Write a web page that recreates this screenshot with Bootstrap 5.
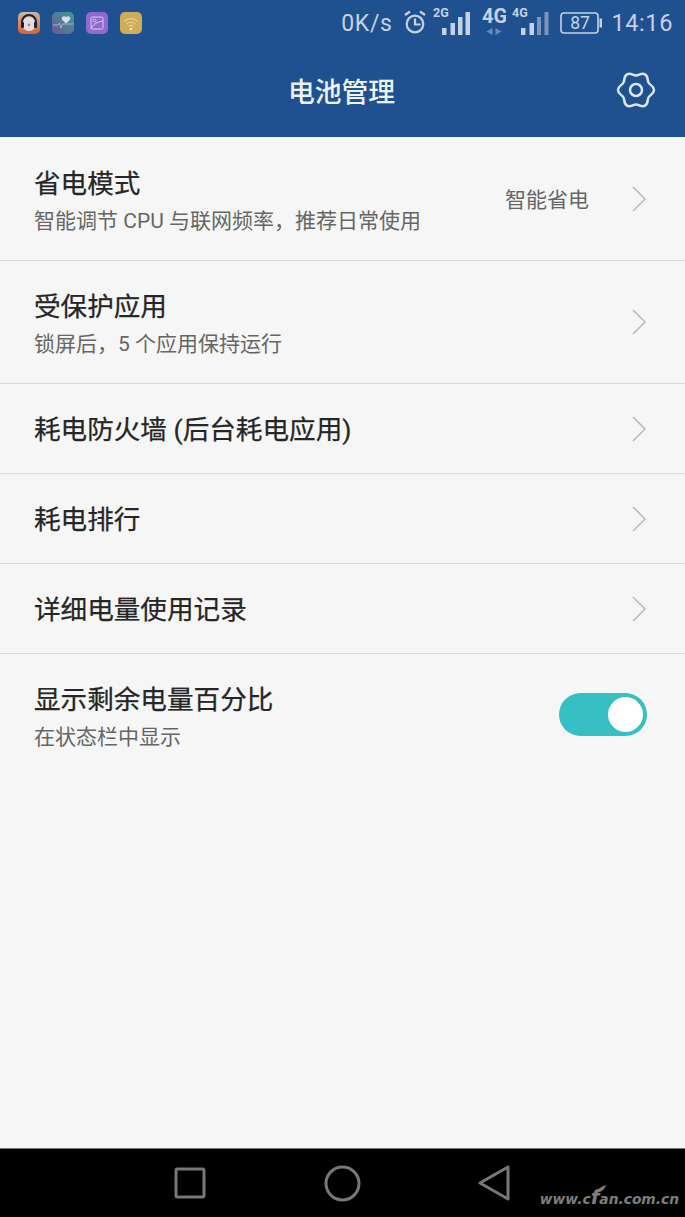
<!DOCTYPE html>
<html lang="zh-CN">
<head>
    <meta charset="UTF-8">
    <meta name="viewport" content="width=device-width, initial-scale=1.0">
    <title>电池管理</title>
    <link href="https://cdn.jsdelivr.net/npm/bootstrap@5.3.0/dist/css/bootstrap.min.css" rel="stylesheet">
    <style>
        html, body { height: 100%; }
        body {
            font-family: "Roboto", "Noto Sans CJK SC", sans-serif;
            background-color: #f6f6f6;
            color: #2f2f2f;
            overflow: hidden;
        }
        .phone { height: 1217px; }
        .top-area { background-color: #1f5090; color: #c6d2e4; height: 137px; }
        .status-bar { height: 46px; padding: 0 12px 0 18px; }
        .app-icon { width: 22px; height: 22px; display: block; }
        .app-icons { gap: 12px; }
        .speed { font-size: 23px; margin-right: 11px; letter-spacing: .6px; padding-top: 2px; }
        .clock { font-size: 23.5px; margin-left: 9px; letter-spacing: .6px; padding-top: 2px; }
        .sig { display: block; }
        .sig-gap-2g { margin-left: 6px; }
        .sig-gap-4g { margin-left: 12px; }
        .sig-gap-small { margin-left: 6px; }
        .sig-gap-batt { margin-left: 11px; }
        .title-bar { height: 91px; padding: 4px 2px 0 0; }
        .page-title { font-size: 26.8px; color: #eef2f7; font-weight: 500; margin: 0; line-height: 1; }
        .gear { position: absolute; right: 29px; top: 70px; }
        .settings-list { padding-top: 1px; }
        .setting-row {
            background: transparent;
            border: 0;
            border-bottom: 1px solid #d9d9d9;
            border-radius: 0;
            padding: 0 38px 0 34px;
            color: #2f2f2f;
        }
        .row-tall { height: 123px; }
        .row-short { height: 90px; }
        .text-tall { padding-top: 3px; }
        .text-short { padding-top: 2px; }
        .row-name { font-size: 26.6px; line-height: 34px; font-weight: 400; margin: 0; color: #262626; -webkit-text-stroke: .25px #262626; }
        .row-sub { font-size: 21px; line-height: 28px; color: #666; margin-top: 6px; }
        .row-value { font-size: 21px; color: #666; margin-right: 42px; padding-top: 4px; }
        .switch-pill {
            width: 88px; height: 43px; border-radius: 22px;
            background: #36c0c4; margin-bottom: 2px; position: relative;
        }
        .switch-knob {
            position: absolute; right: 4px; top: 4px;
            width: 35px; height: 35px; border-radius: 50%; background: #fff;
        }
        .spacer { flex: 1 1 auto; }
        .nav-area { background: #000; height: 69px; border-top: 1px solid #777; position: relative; }
        .nav-area svg { position: absolute; }
        .watermark {
            position: absolute; right: 6px; bottom: 10px;
            font-family: "DejaVu Sans", sans-serif;
            font-size: 13.800px; font-weight: 700; font-style: italic; color: #7d7d7d;
            line-height: 1;
        }
        .watermark-f { font-size: 20px; line-height: 0; }
    </style>
</head>
<body>
<div class="phone d-flex flex-column">
    <div class="top-area position-relative">
        <div class="status-bar d-flex align-items-center justify-content-between">
            <div class="d-flex app-icons">
                <svg class="app-icon" viewBox="0 0 22 22">
                    <defs><linearGradient id="g1" x1="0" y1="0" x2="0" y2="1"><stop offset="0" stop-color="#c9b9a8"/><stop offset="1" stop-color="#d9622b"/></linearGradient></defs>
                    <rect width="22" height="22" rx="5" fill="url(#g1)"/>
                    <circle cx="11" cy="12" r="7" fill="#dfe0e4"/>
                    <path d="M4 14V10a7 7 0 0 1 14 0v4" fill="none" stroke="#1c2230" stroke-width="2"/>
                    <rect x="3" y="10" width="3" height="6" rx="1" fill="#1c2230"/>
                    <rect x="16" y="10" width="3" height="6" rx="1" fill="#1c2230"/>
                    <circle cx="11" cy="13" r="1.4" fill="#d77"/>
                </svg>
                <svg class="app-icon" viewBox="0 0 22 22">
                    <defs><linearGradient id="g2" x1="1" y1="0" x2="0" y2="1"><stop offset="0" stop-color="#3f9a96"/><stop offset="1" stop-color="#6a5a94"/></linearGradient></defs>
                    <rect width="22" height="22" rx="5" fill="url(#g2)"/>
                    <path d="M14 11.500l-4-3.800a2.400 2.400 0 0 1 4-2.600 2.400 2.400 0 0 1 4 2.600z" fill="#d5dfe4"/>
                    <path d="M1 13h5l1.500-2 1.500 5 1.500-4h11" fill="none" stroke="#b7c3d2" stroke-width=".8"/>
                </svg>
                <svg class="app-icon" viewBox="0 0 22 22">
                    <rect width="22" height="22" rx="5" fill="#9069d2"/>
                    <rect x="5" y="5" width="12" height="12" rx="1.500" fill="none" stroke="#d9cdf0" stroke-width="1"/>
                    <circle cx="8.500" cy="8.500" r="1.500" fill="none" stroke="#d9cdf0" stroke-width=".9"/>
                    <path d="M5 17c2-5 6-7 12-8" fill="none" stroke="#d9cdf0" stroke-width="1"/>
                </svg>
                <svg class="app-icon" viewBox="0 0 22 22">
                    <rect width="22" height="22" rx="5" fill="#d0ac55"/>
                    <path d="M4 9.500a10 10 0 0 1 14 0M6.300 12a7 7 0 0 1 9.400 0M8.600 14.400a3.600 3.600 0 0 1 4.800 0" fill="none" stroke="#eadcae" stroke-width="1"/>
                    <circle cx="11" cy="17" r="1.300" fill="#f2e9c9"/>
                </svg>
            </div>
            <div class="d-flex align-items-center">
                <span class="speed">0K/s</span>
                <svg class="sig" width="24" height="36" viewBox="0 0 24 36" fill="none" stroke="#c6d2e4" stroke-width="2.200">
                    <circle cx="12" cy="19" r="8.300"/>
                    <path d="M12 13.500V19.500h5.500"/>
                    <path d="M2 10L7 6.500M22 10L17 6.500" stroke-width="2.400"/>
                </svg>
                <svg class="sig sig-gap-2g" width="37" height="36" viewBox="0 0 37 36">
                    <text x="0" y="12" font-family="Roboto, sans-serif" font-size="12.500" font-weight="700" fill="#c6d2e4">2G</text>
                    <rect x="9" y="23" width="4.500" height="7" fill="#c6d2e4"/>
                    <rect x="17.500" y="18" width="4.500" height="12" fill="#c6d2e4"/>
                    <rect x="25" y="12" width="4.500" height="18" fill="#c6d2e4"/>
                    <rect x="32.500" y="7" width="4.500" height="23" fill="#c6d2e4"/>
                </svg>
                <svg class="sig sig-gap-4g" width="24" height="36" viewBox="0 0 24 36">
                    <text x="0" y="18" font-family="Roboto, sans-serif" font-size="20" font-weight="700" fill="#c6d2e4">4G</text>
                    <path d="M10.500 23v7l-6-3.500zM13.500 23v7l6-3.500z" fill="#6f8bb2"/>
                </svg>
                <svg class="sig sig-gap-small" width="37" height="36" viewBox="0 0 37 36">
                    <text x="0" y="12" font-family="Roboto, sans-serif" font-size="12.500" font-weight="700" fill="#c6d2e4">4G</text>
                    <rect x="9" y="23" width="4.500" height="7" fill="#c6d2e4"/>
                    <rect x="17.500" y="18" width="4.500" height="12" fill="#c6d2e4"/>
                    <rect x="25" y="12" width="4" height="18" fill="#7c95b9"/>
                    <rect x="32.500" y="7" width="4" height="23" fill="#7c95b9"/>
                </svg>
                <svg class="sig sig-gap-batt" width="42" height="22" viewBox="0 0 42 22">
                    <rect x="1" y="1" width="37" height="20" rx="3" fill="none" stroke="#c6d2e4" stroke-width="1.600"/>
                    <path d="M39.500 6.500h2.500v9h-2.500z" fill="#c6d2e4"/>
                    <text x="20" y="17" text-anchor="middle" font-family="Roboto, sans-serif" font-size="17.500" fill="#c6d2e4">87</text>
                </svg>
                <span class="clock">14:16</span>
            </div>
        </div>
        <div class="title-bar d-flex align-items-center justify-content-center">
            <h1 class="page-title">电池管理</h1>
        </div>
        <svg class="gear" width="40" height="40" viewBox="0 0 40 40" fill="none" stroke="#dde5ef" stroke-width="2.500" stroke-linejoin="round">
            <path d="M38 20C38 24 34.100 24.650 32.600 27.250C31.100 29.850 32.460 33.600 29 35.600C25.540 37.600 23 34.500 20 34.500C17 34.500 14.460 37.600 11 35.600C7.540 33.600 8.900 29.850 7.400 27.250C5.900 24.650 2 24 2 20C2 16 5.900 15.350 7.400 12.750C8.900 10.150 7.540 6.400 11 4.400C14.460 2.400 17 5.500 20 5.500C23 5.500 25.540 2.400 29 4.400C32.460 6.400 31.100 10.150 32.600 12.750C34.100 15.350 38 16 38 20Z"/>
            <circle cx="20" cy="20" r="6"/>
        </svg>
    </div>

    <div class="list-group list-group-flush settings-list">
        <div class="list-group-item setting-row row-tall d-flex align-items-center">
            <div class="flex-grow-1 text-tall">
                <h2 class="row-name">省电模式</h2>
                <div class="row-sub">智能调节 CPU 与联网频率，推荐日常使用</div>
            </div>
            <span class="row-value">智能省电</span>
            <svg width="16" height="28" viewBox="0 0 16 28" fill="none" stroke="#b9b9b9" stroke-width="1.500"><path d="M2 2l12 12L2 26"/></svg>
        </div>
        <div class="list-group-item setting-row row-tall d-flex align-items-center">
            <div class="flex-grow-1 text-tall">
                <h2 class="row-name">受保护应用</h2>
                <div class="row-sub">锁屏后，5 个应用保持运行</div>
            </div>
            <svg width="16" height="28" viewBox="0 0 16 28" fill="none" stroke="#b9b9b9" stroke-width="1.500"><path d="M2 2l12 12L2 26"/></svg>
        </div>
        <div class="list-group-item setting-row row-short d-flex align-items-center">
            <h2 class="row-name flex-grow-1 text-short">耗电防火墙 (后台耗电应用)</h2>
            <svg width="16" height="28" viewBox="0 0 16 28" fill="none" stroke="#b9b9b9" stroke-width="1.500"><path d="M2 2l12 12L2 26"/></svg>
        </div>
        <div class="list-group-item setting-row row-short d-flex align-items-center">
            <h2 class="row-name flex-grow-1 text-short">耗电排行</h2>
            <svg width="16" height="28" viewBox="0 0 16 28" fill="none" stroke="#b9b9b9" stroke-width="1.500"><path d="M2 2l12 12L2 26"/></svg>
        </div>
        <div class="list-group-item setting-row row-short d-flex align-items-center">
            <h2 class="row-name flex-grow-1 text-short">详细电量使用记录</h2>
            <svg width="16" height="28" viewBox="0 0 16 28" fill="none" stroke="#b9b9b9" stroke-width="1.500"><path d="M2 2l12 12L2 26"/></svg>
        </div>
        <div class="list-group-item setting-row row-tall d-flex align-items-center">
            <div class="flex-grow-1 text-tall">
                <h2 class="row-name">显示剩余电量百分比</h2>
                <div class="row-sub">在状态栏中显示</div>
            </div>
            <div class="switch-pill"><span class="switch-knob"></span></div>
        </div>
    </div>

    <div class="spacer"></div>

    <div class="nav-area">
        <svg style="left:174px;top:18px" width="32" height="32" viewBox="0 0 32 32" fill="none" stroke="#777" stroke-width="3" stroke-linejoin="round"><rect x="2" y="2" width="28" height="28" rx="1.500"/></svg>
        <svg style="left:324px;top:16px" width="37" height="37" viewBox="0 0 37 37" fill="none" stroke="#777" stroke-width="3"><circle cx="18.500" cy="18.500" r="16.500"/></svg>
        <svg style="left:478px;top:16px" width="33" height="36" viewBox="0 0 33 36" fill="none" stroke="#777" stroke-width="3" stroke-linejoin="round"><path d="M30 2v32L2 18z"/></svg>
        <span class="watermark">www.c<span class="watermark-f">f</span>an.com.cn</span>
        <svg style="left:595px;top:36px" width="12" height="9" viewBox="0 0 12 9"><path d="M0 8C2 4 6 2 11 0 10 4 7 7 0 8z" fill="#7d7d7d"/></svg>
    </div>
</div>
<script src="https://cdn.jsdelivr.net/npm/bootstrap@5.3.0/dist/js/bootstrap.bundle.min.js"></script>
</body>
</html>
